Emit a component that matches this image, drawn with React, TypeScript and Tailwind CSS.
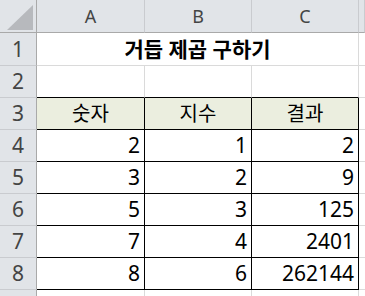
import React from "react";

const rows: number[][] = [
  [2, 1, 2],
  [3, 2, 9],
  [5, 3, 125],
  [7, 4, 2401],
  [8, 6, 262144],
];

const hdr = "bg-[#e1e4e8] text-[#444444] flex items-center justify-center";

function RowNum({ n }: { n?: number }) {
  return (
    <div className={`${hdr} text-[21px] border-r border-r-[#a9a9a9] border-b border-b-[#c9cbcf]`}>
      {n}
    </div>
  );
}

export default function App() {
  return (
    <div className="w-[365px] h-[296px] overflow-hidden bg-white font-['Noto_Sans','Noto_Sans_CJK_KR',sans-serif] leading-none">
      <div className="grid grid-cols-[37px_108px_107px_107px_1fr] grid-rows-[33px_33px_repeat(8,32px)]">
        {/* column headers */}
        <div className="bg-[#e1e4e8] border-r border-b border-[#a9a9a9] flex items-end justify-end pr-[3px] pb-[2px]">
          <svg width="26" height="25" viewBox="0 0 26 25">
            <polygon points="26,0 26,25 0,25" fill="#b7b9bd" />
          </svg>
        </div>
        {["A", "B", "C", ""].map((c, i) => (
          <div
            key={i}
            className={`${hdr} text-[18px] border-r border-r-[#c9cbcf] border-b border-b-[#a9a9a9]`}
          >
            {c}
          </div>
        ))}

        {/* row 1 - title (merged A1:C1) */}
        <RowNum n={1} />
        <div className="col-span-3 flex items-center justify-center text-[21px] font-bold text-black border-r border-b border-[#dadada]">
          거듭 제곱 구하기
        </div>
        <div className="border-b border-[#dadada]" />

        {/* row 2 */}
        <RowNum n={2} />
        <div className="border-r border-r-[#dadada] border-b border-b-black" />
        <div className="border-r border-r-[#dadada] border-b border-b-black" />
        <div className="border-r border-r-[#dadada] border-b border-b-black" />
        <div className="border-b border-[#dadada]" />

        {/* row 3 - table header */}
        <RowNum n={3} />
        {["숫자", "지수", "결과"].map((t) => (
          <div
            key={t}
            className="bg-[#ebeedf] flex items-center justify-center text-[20px] text-black border-r border-b border-black"
          >
            {t}
          </div>
        ))}
        <div className="border-b border-[#dadada]" />

        {/* rows 4-8 */}
        {rows.map((r, i) => (
          <React.Fragment key={i}>
            <RowNum n={i + 4} />
            {r.map((v, j) => (
              <div
                key={j}
                className="flex items-center justify-end pr-[4px] text-[21px] text-black border-r border-b border-black"
              >
                {v}
              </div>
            ))}
            <div className="border-b border-[#dadada]" />
          </React.Fragment>
        ))}

        {/* row 9, only its top edge shows */}
        <RowNum />
        <div className="border-r border-[#dadada]" />
        <div className="border-r border-[#dadada]" />
        <div className="border-r border-[#dadada]" />
        <div />
      </div>
    </div>
  );
}
